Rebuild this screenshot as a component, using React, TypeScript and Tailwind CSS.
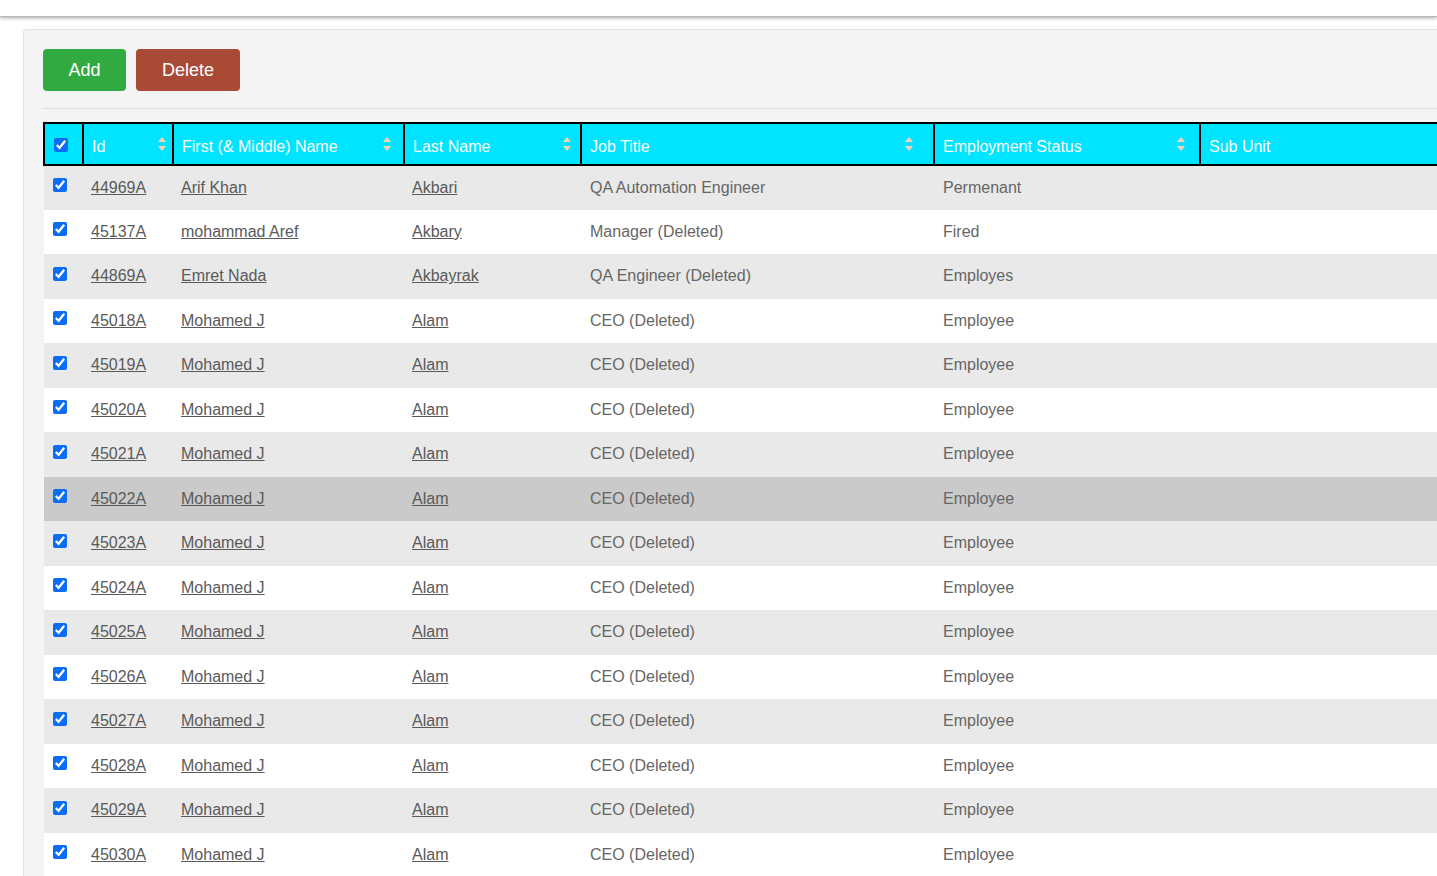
import React from 'react';

type Row = {
	id: string;
	first: string;
	last: string;
	job: string;
	status: string;
};

const rows: Row[] = [
	{ id: '44969A', first: 'Arif Khan', last: 'Akbari', job: 'QA Automation Engineer', status: 'Permenant' },
	{ id: '45137A', first: 'mohammad Aref', last: 'Akbary', job: 'Manager (Deleted)', status: 'Fired' },
	{ id: '44869A', first: 'Emret Nada', last: 'Akbayrak', job: 'QA Engineer (Deleted)', status: 'Employes' },
	...Array.from({ length: 13 }, (_, i) => ({
		id: `450${18 + i}A`,
		first: 'Mohamed J',
		last: 'Alam',
		job: 'CEO (Deleted)',
		status: 'Employee',
	})),
];

const columns = [
	{ label: 'Id', width: 'w-[90px]', icon: 'right-[6px]' },
	{ label: 'First (& Middle) Name', width: 'w-[231px]', icon: 'right-[12px]' },
	{ label: 'Last Name', width: 'w-[177px]', icon: 'right-[9px]' },
	{ label: 'Job Title', width: 'w-[353px]', icon: 'right-[20px]' },
	{ label: 'Employment Status', width: 'w-[266px]', icon: 'right-[14px]' },
	{ label: 'Sub Unit', width: 'w-[300px]', icon: '' },
];

function SortIcon({ pos }: { pos: string }) {
	return (
		<svg className={`absolute top-[13px] ${pos}`} width="8" height="14" viewBox="0 0 8 14">
			<polygon points="4,0 8,5 0,5" fill="#f6d4b2" />
			<polygon points="0,9 8,9 4,14" fill="#f6d4b2" />
		</svg>
	);
}

export default function App() {
	return (
		<div className="h-screen overflow-hidden bg-white" style={{ fontFamily: '"Liberation Sans", Arial, sans-serif' }}>
			{/* top bar */}
			<div className="h-[17px] bg-white shadow-[0_1px_4px_rgba(0,0,0,0.35)] border-b border-[#b8b8b8]" />
			<div className="pl-[23px] pt-[12px]">
				<div className="w-[1500px] rounded-[3px] border border-[#e3e3e3] bg-[#f4f4f4] p-[19px]">
					<div className="flex gap-[10px]">
						<button className="h-[42px] w-[83px] rounded-[4px] bg-[#32aa42] text-[18px] text-white">Add</button>
						<button className="h-[42px] w-[104px] rounded-[4px] bg-[#a84a36] text-[18px] text-white">Delete</button>
					</div>
					<div className="mt-[17px] mb-[13px] border-t border-[#dcdcdc]" />
					<table className="border-collapse text-[16px] table-fixed">
						<thead>
							<tr className="bg-[#00e4ff]">
								<th className="w-[39px] h-[42px] border-2 border-black pl-[9px] text-left align-middle">
									<input type="checkbox" defaultChecked className="w-[14px] h-[14px] mt-[2px] accent-[#0b6cf5] block" />
								</th>
								{columns.map((c) => (
									<th
										key={c.label}
										className={`${c.width} relative h-[42px] border-2 border-black pl-[8px] pt-[14px] pb-[4px] text-left font-normal text-white leading-[18px] align-top`}
									>
										{c.label}
										{c.icon && <SortIcon pos={c.icon} />}
									</th>
								))}
							</tr>
						</thead>
						<tbody className="text-[#666]">
							{rows.map((r, idx) => {
								const bg = idx === 7 ? 'bg-[#cacaca]' : idx % 2 === 0 ? 'bg-[#e9e9e9]' : 'bg-white';
								return (
									<tr key={r.id} className={`${bg} h-[44.5px]`}>
										<td className="pl-[9px] align-middle">
											<input type="checkbox" defaultChecked className="w-[14px] h-[14px] -mt-[5px] accent-[#0b6cf5] block" />
										</td>
										<td className="pl-[8px]">
											<a href="#" className="underline text-[#5a5a5a]">{r.id}</a>
										</td>
										<td className="pl-[8px]">
											<a href="#" className="underline text-[#5a5a5a]">{r.first}</a>
										</td>
										<td className="pl-[8px]">
											<a href="#" className="underline text-[#5a5a5a]">{r.last}</a>
										</td>
										<td className="pl-[9px]">{r.job}</td>
										<td className="pl-[9px]">{r.status}</td>
										<td className="pl-[9px]"></td>
									</tr>
								);
							})}
						</tbody>
					</table>
				</div>
			</div>
		</div>
	);
}
